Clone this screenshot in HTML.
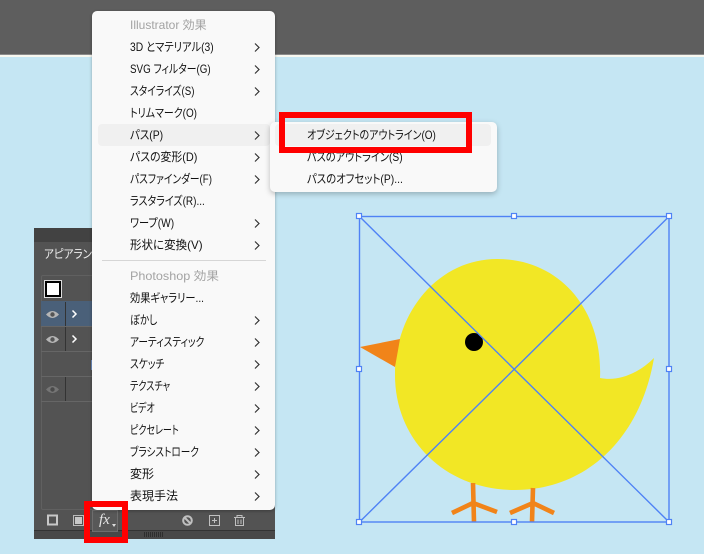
<!DOCTYPE html>
<html lang="ja"><head><meta charset="utf-8">
<style>
html,body{margin:0;padding:0}
body{width:704px;height:554px;overflow:hidden;position:relative;background:#c5e6f3;font-family:"Liberation Sans","Noto Sans CJK JP",sans-serif}
.a{position:absolute}
.m{position:absolute;font-size:12px;line-height:22px;height:22px;white-space:nowrap;color:#111;left:130px;font-feature-settings:"palt";transform-origin:0 50%}
.g{color:#a3a3a3}
svg{position:absolute;left:0;top:0}
</style></head><body>
<div class="a" style="left:0;top:0;width:704px;height:54px;background:#5e5e5e"></div>
<div class="a" style="left:0;top:54px;width:704px;height:1px;background:#8a8a8a"></div>
<div class="a" style="left:0;top:55px;width:704px;height:2px;background:#f7f7ef"></div>

<svg width="704" height="554" viewBox="0 0 704 554" fill="none">
<path d="M600 378C603 310 560 259 497 259C440 259 395 310 395 375C395 440 445 490 515 490C585 490 640 440 654 358C640 372 620 382 600 378Z" fill="#f2e725"/>
<path d="M360 347L400 339L395 367Z" fill="#f18419"/>
<circle cx="474" cy="342" r="9" fill="#000"/>
<g stroke="#f18419" stroke-width="4.6" fill="none">
<path d="M473 483L474 522M452 513L473 503L497 512"/>
<path d="M533 488L532 522M510 513L533 503L554 513"/>
</g>
<g stroke="#4f82f5" stroke-width="1.4">
<rect x="359.500" y="216.500" width="309.500" height="305.500"/>
<path d="M359.500 216.500L669 522M669 216.500L359.500 522"/>
</g>
<g fill="#fff" stroke="#4f82f5" stroke-width="1.2">
<rect x="356.500" y="213.500" width="5" height="5"/><rect x="511.500" y="213.500" width="5" height="5"/><rect x="666.500" y="213.500" width="5" height="5"/>
<rect x="356.500" y="366.500" width="5" height="5"/><rect x="666.500" y="366.500" width="5" height="5"/>
<rect x="356.500" y="519.500" width="5" height="5"/><rect x="511.500" y="519.500" width="5" height="5"/><rect x="666.500" y="519.500" width="5" height="5"/>
</g>
</svg>

<!-- panel -->
<div class="a" style="left:34px;top:228px;width:241px;height:311px;background:#535353;border-radius:2px 0 0 0"></div>
<div class="a" style="left:34px;top:228px;width:241px;height:14px;background:#424242"></div>
<div class="a" style="left:34px;top:530px;width:241px;height:9px;background:#484848;border-top:1px solid #333;box-sizing:border-box"></div>
<div class="a" style="left:44px;top:246px;color:#eee;font-size:12px;line-height:16px;white-space:nowrap;font-feature-settings:'palt';transform:scaleX(.88);transform-origin:0 50%">アピアランス</div>
<div class="a" style="left:41px;top:275px;width:60px;height:235px;border:1px solid #606060;border-right:0;border-radius:2px 0 0 2px;box-sizing:border-box"></div>
<div class="a" style="left:44px;top:280px;width:18px;height:18px;background:#fff;border:3px solid #000;outline:1px solid #ddd;outline-offset:-1px;box-sizing:border-box"></div>
<div class="a" style="left:41px;top:301px;width:60px;height:25px;background:#4a6079"></div>
<div class="a" style="left:41px;top:351px;width:60px;height:1px;background:#666"></div>
<div class="a" style="left:41px;top:326px;width:60px;height:1px;background:#666"></div>
<div class="a" style="left:41px;top:376px;width:60px;height:1px;background:#666"></div>
<div class="a" style="left:41px;top:401px;width:60px;height:1px;background:#666"></div>
<div class="a" style="left:65px;top:302px;width:1px;height:24px;background:#333"></div>
<div class="a" style="left:65px;top:327px;width:1px;height:24px;background:#333"></div>
<div class="a" style="left:65px;top:377px;width:1px;height:24px;background:#333"></div>
<div class="a" style="left:91px;top:360px;width:1px;height:10px;background:#6f8fc0"></div>

<svg width="704" height="554" viewBox="0 0 704 554" fill="none">
<g>
<path d="M46 314.500Q52.500 307.500 59 314.500Q52.500 321.500 46 314.500Z" fill="#b5b5b5"/><circle cx="52.500" cy="314.500" r="2.200" fill="#555"/>
<path d="M46 339.500Q52.500 332.500 59 339.500Q52.500 346.500 46 339.500Z" fill="#b5b5b5"/><circle cx="52.500" cy="339.500" r="2.200" fill="#555"/>
<path d="M46 389.500Q52.500 382.500 59 389.500Q52.500 396.500 46 389.500Z" fill="#757575"/><circle cx="52.500" cy="389.500" r="2.200" fill="#4a4a4a"/>
</g>
<path d="M72.500 310.500L76 314L72.500 317.500M72.500 335.500L76 339L72.500 342.500" stroke="#fff" stroke-width="1.500"/>
<!-- footer -->
<rect x="48" y="515.500" width="9" height="9" stroke="#c8c8c8" stroke-width="2"/>
<rect x="73.500" y="515.500" width="10" height="10" stroke="#bbb"/><rect x="75" y="517" width="7" height="7" fill="#c8c8c8"/>
<rect x="92.500" y="510.500" width="25" height="21" fill="#585858" stroke="#6e6e6e"/>
<circle cx="187.500" cy="520.500" r="4.300" stroke="#c0c0c0" stroke-width="2"/><path d="M184.500 517.500L190.500 523.500" stroke="#c0c0c0" stroke-width="2"/>
<rect x="209.500" y="515.500" width="10" height="10" stroke="#c0c0c0"/><path d="M214.500 518V523M212 520.500H217" stroke="#c0c0c0"/>
<path d="M234 517.500H245M237 517V515.500H242V517M235.500 518V525.500H243.500V518M238 519.500V524M241 519.500V524" stroke="#c0c0c0"/>
<path d="M144.500 532V537M146.500 532V537M148.500 532V537M150.500 532V537M152.500 532V537M154.500 532V537M156.500 532V537M158.500 532V537M160.500 532V537M162.500 532V537" stroke="#2e2e2e"/>
</svg>
<div class="a" style="left:99px;top:511px;color:#e6e6e6;font:italic 15px/18px 'Liberation Serif',serif">fx</div>
<div class="a" style="left:112px;top:524px;width:0;height:0;border:2px solid transparent;border-top:3px solid #ddd"></div>

<!-- menu -->
<div class="a" style="left:92px;top:11px;width:183px;height:499px;background:#f9f9f9;border-radius:5px;box-shadow:0 1px 3px rgba(0,0,0,.3)"></div>
<div class="a" style="left:98px;top:124px;width:172px;height:22px;background:#f0f0f0;border-radius:4px"></div>
<div class="a" style="left:102px;top:260px;width:164px;height:1px;background:#d6d6d6"></div>
<div class="m g" style="top:14px">Illustrator 効果</div>
<div class="m" style="top:36px;transform:scaleX(.857)">3D とマテリアル(3)</div>
<div class="m" style="top:58px;transform:scaleX(.818)">SVG フィルター(G)</div>
<div class="m" style="top:80px;transform:scaleX(.81)">スタイライズ(S)</div>
<div class="m" style="top:102px;transform:scaleX(.827)">トリムマーク(O)</div>
<div class="m" style="top:124px;transform:scaleX(.87)">パス(P)</div>
<div class="m" style="top:146px;transform:scaleX(.907)">パスの変形(D)</div>
<div class="m" style="top:168px;transform:scaleX(.81)">パスファインダー(F)</div>
<div class="m" style="top:190px;transform:scaleX(.833)">ラスタライズ(R)...</div>
<div class="m" style="top:212px;transform:scaleX(.846)">ワープ(W)</div>
<div class="m" style="top:234px;transform:scaleX(.96)">形状に変換(V)</div>
<div class="m g" style="top:265px;transform:scaleX(1.05)">Photoshop 効果</div>
<div class="m" style="top:287px;transform:scaleX(.85)">効果ギャラリー...</div>
<div class="m" style="top:309px;transform:scaleX(.8)">ぼかし</div>
<div class="m" style="top:331px;transform:scaleX(.806)">アーティスティック</div>
<div class="m" style="top:353px;transform:scaleX(.81)">スケッチ</div>
<div class="m" style="top:375px;transform:scaleX(.76)">テクスチャ</div>
<div class="m" style="top:397px;transform:scaleX(.74)">ビデオ</div>
<div class="m" style="top:419px;transform:scaleX(.75)">ピクセレート</div>
<div class="m" style="top:441px;transform:scaleX(.8)">ブラシストローク</div>
<div class="m" style="top:463px">変形</div>
<div class="m" style="top:485px">表現手法</div>
<svg width="704" height="554" viewBox="0 0 704 554" fill="none">
<path stroke="#333" stroke-width="1.200" d="M255 43.500L259 47.500L255 51.500M255 65.500L259 69.500L255 73.500M255 87.500L259 91.500L255 95.500M255 131.500L259 135.500L255 139.500M255 153.500L259 157.500L255 161.500M255 175.500L259 179.500L255 183.500M255 219.500L259 223.500L255 227.500M255 241.500L259 245.500L255 249.500M255 316.500L259 320.500L255 324.500M255 338.500L259 342.500L255 346.500M255 360.500L259 364.500L255 368.500M255 382.500L259 386.500L255 390.500M255 404.500L259 408.500L255 412.500M255 426.500L259 430.500L255 434.500M255 448.500L259 452.500L255 456.500M255 470.500L259 474.500L255 478.500M255 492.500L259 496.500L255 500.500"/>
</svg>

<!-- submenu -->
<div class="a" style="left:270px;top:122px;width:227px;height:70px;background:#f9f9f9;border-radius:5px;box-shadow:0 2px 6px rgba(0,0,0,.25)"></div>
<div class="a" style="left:275px;top:124px;width:216px;height:22px;background:#f0f0f0;border-radius:4px"></div>
<div class="m" style="left:307px;top:124px;transform:scaleX(.832)">オブジェクトのアウトライン(O)</div>
<div class="m" style="left:307px;top:146px;transform:scaleX(.85)">パスのアウトライン(S)</div>
<div class="m" style="left:307px;top:168px;transform:scaleX(.865)">パスのオフセット(P)...</div>

<!-- red boxes -->
<div class="a" style="left:279px;top:112px;width:193px;height:41px;border:6px solid #f00;box-sizing:border-box"></div>
<div class="a" style="left:84px;top:501px;width:44px;height:42px;border:6px solid #f00;box-sizing:border-box"></div>
</body></html>
